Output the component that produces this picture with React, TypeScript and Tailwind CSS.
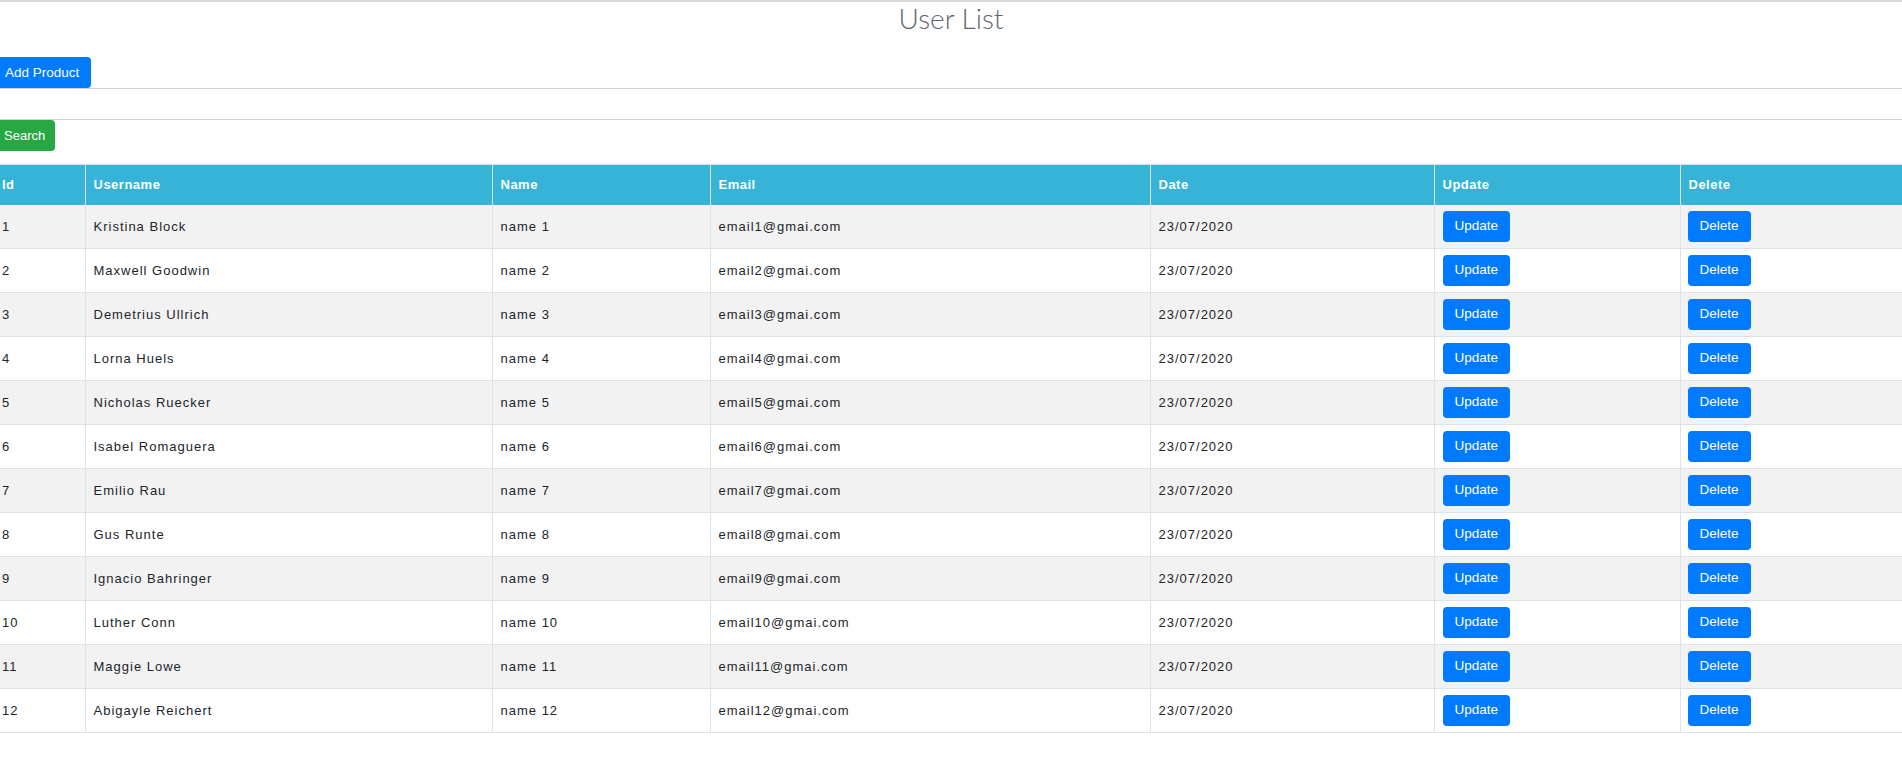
import React from 'react';

interface User {
  id: number;
  username: string;
  name: string;
  email: string;
  date: string;
}

const usernames = [
  'Kristina Block',
  'Maxwell Goodwin',
  'Demetrius Ullrich',
  'Lorna Huels',
  'Nicholas Ruecker',
  'Isabel Romaguera',
  'Emilio Rau',
  'Gus Runte',
  'Ignacio Bahringer',
  'Luther Conn',
  'Maggie Lowe',
  'Abigayle Reichert',
];

const users: User[] = usernames.map((username, i) => ({
  id: i + 1,
  username,
  name: `name ${i + 1}`,
  email: `email${i + 1}@gmai.com`,
  date: '23/07/2020',
}));

const cell = 'border-x border-[#dee2e6] first:border-l-0 last:border-r-0 align-middle';

export default function App() {
  return (
    <div className="min-h-[770px] w-full bg-white border-t-2 border-[#dadade] font-['Liberation_Sans',Arial,sans-serif] text-[#212529]">
      {/* Title */}
      <h1 className="h-[55px] text-center font-['Lato',sans-serif] text-[28px] font-light leading-[32px] text-[#5f6670]">
        User List
      </h1>

      <button className="-ml-[7px] h-[31px] rounded-[4px] bg-[#007bff] px-3 text-[13.5px] leading-[20px] text-white">
        Add Product
      </button>

      {/* Search box */}
      <input
        className="block h-[32px] w-full border-y border-[#d3d3d6] bg-white outline-none"
        type="text"
      />

      <button className="-ml-[8px] h-[31px] rounded-[4px] bg-[#28a745] pl-3 pr-[10px] text-[13px] leading-[20px] text-white">
        Search
      </button>

      <table className="mt-[13px] w-full table-fixed border-collapse border-t border-[#dee2e6] text-[13px] tracking-[1px]">
        <colgroup>
          <col className="w-[85px]" />
          <col className="w-[407px]" />
          <col className="w-[218px]" />
          <col className="w-[440px]" />
          <col className="w-[284px]" />
          <col className="w-[246px]" />
          <col />
        </colgroup>
        <thead>
          <tr className="h-[40px] bg-[#36b3d6] text-left text-white">
            <th className={`${cell} pl-[2px] font-bold tracking-[0.5px]`}>Id</th>
            <th className={`${cell} pl-2 font-bold tracking-[0.5px]`}>Username</th>
            <th className={`${cell} pl-2 font-bold tracking-[0.5px]`}>Name</th>
            <th className={`${cell} pl-2 font-bold tracking-[0.5px]`}>Email</th>
            <th className={`${cell} pl-2 font-bold tracking-[0.5px]`}>Date</th>
            <th className={`${cell} pl-2 font-bold tracking-[0.5px]`}>Update</th>
            <th className={`${cell} pl-2 font-bold tracking-[0.5px]`}>Delete</th>
          </tr>
        </thead>
        <tbody>
          {users.map((u, i) => (
            <tr
              key={u.id}
              className={`h-[44px] border-b border-[#dee2e6] ${i % 2 === 0 ? 'bg-[#f2f2f2]' : 'bg-white'}`}
            >
              <td className={`${cell} pl-[2px]`}>{u.id}</td>
              <td className={`${cell} pl-2`}>{u.username}</td>
              <td className={`${cell} pl-2`}>{u.name}</td>
              <td className={`${cell} pl-2`}>{u.email}</td>
              <td className={`${cell} pl-2`}>{u.date}</td>
              <td className={`${cell} pl-2`}>
                <button className="h-[31px] rounded-[4px] bg-[#007bff] px-3 text-[13.5px] tracking-normal text-white">
                  Update
                </button>
              </td>
              <td className={`${cell} pl-[7px]`}>
                <button className="h-[31px] rounded-[4px] bg-[#007bff] px-3 text-[13.5px] tracking-normal text-white">
                  Delete
                </button>
              </td>
            </tr>
          ))}
        </tbody>
      </table>
    </div>
  );
}
